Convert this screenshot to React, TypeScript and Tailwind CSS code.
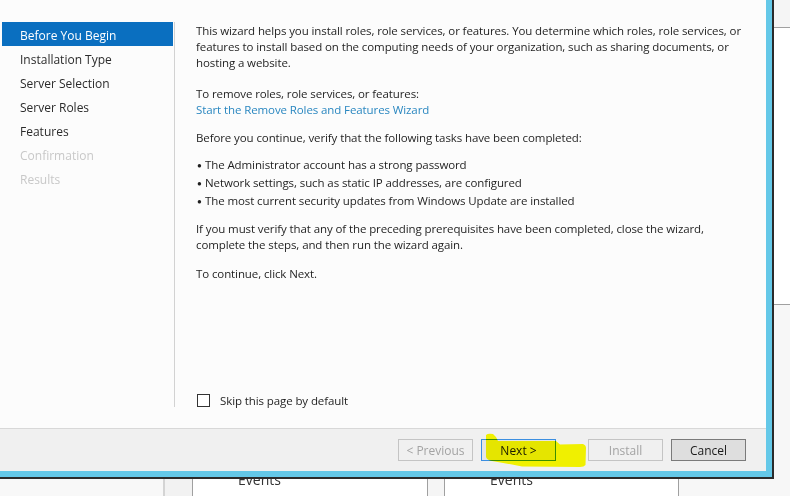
import React from "react";

const steps = [
  { label: "Before You Begin", state: "active" },
  { label: "Installation Type", state: "normal" },
  { label: "Server Selection", state: "normal" },
  { label: "Server Roles", state: "normal" },
  { label: "Features", state: "normal" },
  { label: "Confirmation", state: "disabled" },
  { label: "Results", state: "disabled" },
];

const prerequisites = [
  "The Administrator account has a strong password",
  "Network settings, such as static IP addresses, are configured",
  "The most current security updates from Windows Update are installed",
];

function WizardButton({
  label,
  kind,
}: {
  label: string;
  kind: "disabled" | "default" | "normal";
}) {
  const styles = {
    disabled: "border-[#c4c4c4] bg-[#f0f0f0] text-[#a3a3a3]",
    default: "border-[#3c8ee0] bg-[#e5e5e5] text-[#1a1a1a]",
    normal: "border-[#7a7a7a] bg-[#dedede] text-[#1a1a1a]",
  }[kind];
  return (
    <div
      className={`w-[75px] h-[22px] border pt-[1px] flex items-center justify-center text-[12px] ${styles}`}
    >
      {label}
    </div>
  );
}

function BottomStrip() {
  return (
    <div className="flex h-[17px] overflow-hidden shrink-0">
      <div className="w-[163px] bg-[#f8f8f8]" />
      <div className="w-[2px] bg-[#d4d4d4]" />
      <div className="w-[27px] bg-[#f2f2f2]" />
      <div className="w-px bg-[#a0a0a0]" />
      <div className="w-[234px] bg-white pl-[45px]">
        <div className="-mt-[6px] text-[14px] leading-[14px] text-[#333]">Events</div>
      </div>
      <div className="w-px bg-[#a0a0a0]" />
      <div className="w-[16px] bg-[#f5f5f5]" />
      <div className="w-px bg-[#a0a0a0]" />
      <div className="w-[233px] bg-white pl-[45px]">
        <div className="-mt-[6px] text-[14px] leading-[14px] text-[#333]">Events</div>
      </div>
      <div className="w-px bg-[#a0a0a0]" />
      <div className="flex-1 bg-[#f7f7f7]" />
    </div>
  );
}

export default function App() {
  return (
    <div className="w-[790px] h-[496px] overflow-hidden bg-[#f7f7f7] flex flex-col font-['Open_Sans',sans-serif]">
      <div className="flex h-[479px] shrink-0">
        {/* wizard window */}
        <div className="relative w-[774px] h-[479px] shrink-0 border-r-2 border-b-2 border-[#2b2b2b]">
          <div className="h-full border-r-[6px] border-b-[6px] border-[#64c8e8] flex flex-col">
            <div className="flex h-[428px] bg-[#fcfcfc] shrink-0">
              {/* step list */}
              <div className="w-[174px] pt-[22px]">
                {steps.map((s) => (
                  <div
                    key={s.label}
                    className={`ml-[2px] w-[171px] h-[24px] pl-[18px] pt-[4px] flex items-center text-[12px] ${
                      s.state === "active"
                        ? "bg-[#0a6fc0] text-white"
                        : s.state === "disabled"
                        ? "text-[#c8c8c8]"
                        : "text-[#2b2b2b]"
                    }`}
                  >
                    {s.label}
                  </div>
                ))}
              </div>
              <div className="w-px mt-[22px] h-[385px] bg-[#d2d2d2]" />

              {/* page body */}
              <div className="flex-1 pl-[21px] pt-[23px] flex flex-col text-[11.5px] tracking-[-0.1px] leading-[16px] text-[#1f1f1f] whitespace-nowrap">
                <p>
                  This wizard helps you install roles, role services, or features. You determine which roles, role services, or
                  <br />
                  features to install based on the computing needs of your organization, such as sharing documents, or
                  <br />
                  hosting a website.
                </p>
                <p className="mt-[15px]">
                  To remove roles, role services, or features:
                  <br />
                  <span className="text-[#2a87c0]">Start the Remove Roles and Features Wizard</span>
                </p>
                <p className="mt-[12px]">
                  Before you continue, verify that the following tasks have been completed:
                </p>
                <ul className="mt-[10px] leading-[18px]">
                  {prerequisites.map((item) => (
                    <li key={item} className="flex items-center">
                      <span className="w-[9px] pl-[1px] text-[8px]">●</span>
                      {item}
                    </li>
                  ))}
                </ul>
                <p className="mt-[11px]">
                  If you must verify that any of the preceding prerequisites have been completed, close the wizard,
                  <br />
                  complete the steps, and then run the wizard again.
                </p>
                <p className="mt-[13px]">To continue, click Next.</p>

                <div className="mt-auto mb-[21px] h-[13px] flex items-center">
                  <div className="w-[13px] h-[13px] ml-[1px] border border-[#333] bg-white" />
                  <span className="ml-[10px] pt-[1px]">Skip this page by default</span>
                </div>
              </div>
            </div>

            {/* button bar */}
            <div className="flex-1 border-t border-[#d8d8d8] bg-[#f0f0f0] pt-[10px] pr-[20px] flex justify-end items-start">
              <WizardButton label="< Previous" kind="disabled" />
              <div className="ml-[8px]">
                <WizardButton label="Next >" kind="default" />
              </div>
              <div className="ml-[32px]">
                <WizardButton label="Install" kind="disabled" />
              </div>
              <div className="ml-[8px]">
                <WizardButton label="Cancel" kind="normal" />
              </div>
            </div>
          </div>

          {/* highlighter mark over the Next button */}
          <svg
            className="absolute left-0 top-0 pointer-events-none mix-blend-multiply"
            width="774"
            height="479"
          >
            <path
              d="M486 435 Q488 433 493 434 L496 437 L498 441 L556 441 L560 444.5 L583 444 Q586 445 586 448 L585.5 465 Q584 467 580 467 L522 466.5 L512 464.5 L492 461 Q487 460 486 457 Z"
              fill="#ffff00"
            />
          </svg>
        </div>

        {/* neighbouring window edge */}
        <div className="flex-1 flex flex-col">
          <div className="h-[28px] bg-[#f5f5f5] border-b border-[#a0a0a0]" />
          <div className="h-[277px] bg-white border-b border-[#a0a0a0]" />
          <div className="flex-1 bg-[#f7f7f7]" />
        </div>
      </div>
      <BottomStrip />
    </div>
  );
}
